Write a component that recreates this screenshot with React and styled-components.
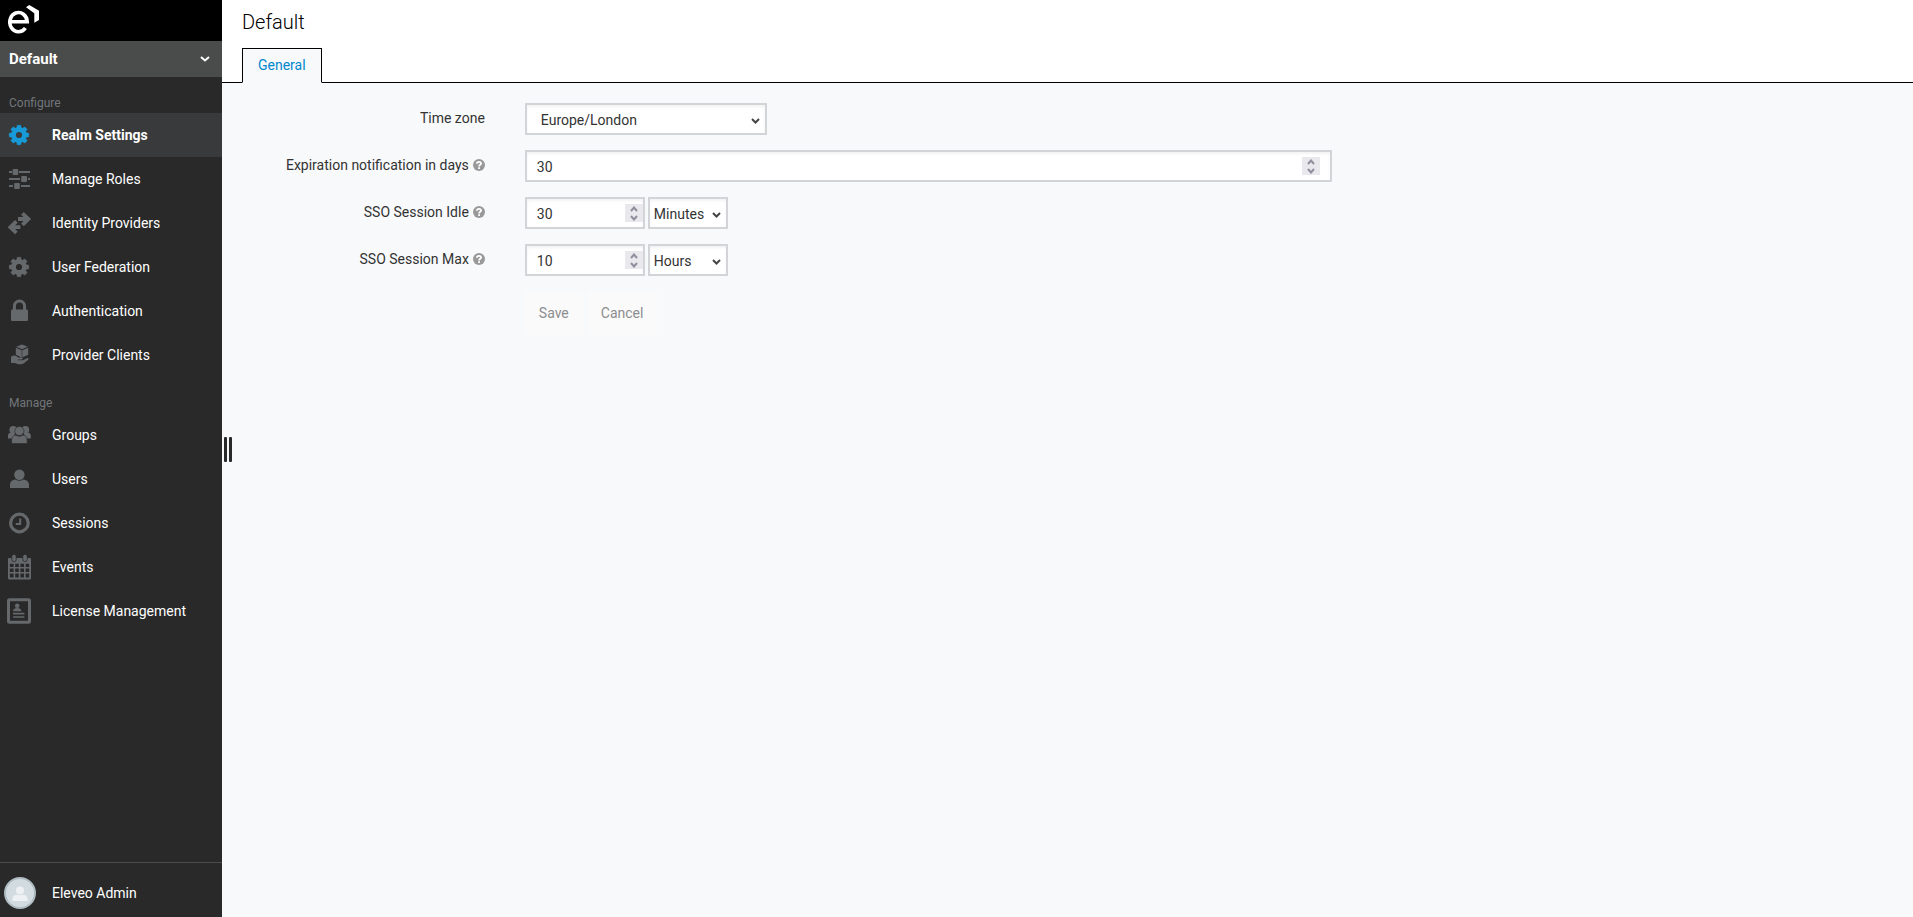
import React, { useState } from "react"
import styled, { createGlobalStyle } from "styled-components"

const GlobalStyle = createGlobalStyle`
  * {
    box-sizing: border-box;
  }
  body {
    margin: 0;
    font-family: Roboto, "Liberation Sans", sans-serif;
    font-size: 14px;
    line-height: 20px;
    color: #333;
    background: #f8f9fb;
  }
  button, input, select {
    font: inherit;
    color: inherit;
  }
`

const Container = styled.div`
  display: flex;
  min-height: 100vh;
`

const Sidebar = styled.aside`
  display: flex;
  flex-direction: column;
  flex: none;
  width: 222px;
  color: #fff;
  background: #292929;
`

const Brand = styled.a`
  display: flex;
  height: 41px;
  padding: 4px 8px;
  background: #000;
`

const RealmButton = styled.button`
  display: flex;
  align-items: center;
  justify-content: space-between;
  height: 36px;
  padding: 0 12px 0 9px;
  border: 0;
  font-size: 15px;
  font-weight: 700;
  color: #fff;
  background: #4a4b4b;
`

const NavTitle = styled.h2`
  margin: 0;
  padding: 16px 9px 0;
  height: 36px;
  font-size: 12px;
  line-height: 20px;
  font-weight: 400;
  color: #72767b;
`

const NavList = styled.ul`
  margin: 0;
  padding: 0;
  list-style: none;
`

const NavLink = styled.a`
  display: flex;
  align-items: center;
  gap: 20px;
  height: 44px;
  padding-left: 7px;
  color: #fff;
  font-weight: ${props => props.$active ? 700 : 400};
  background: ${props => props.$active ? "#393a3b" : "transparent"};
  text-decoration: none;
  svg {
    flex: none;
    color: ${props => props.$active ? "#189ad8" : "#66696b"};
  }
`

const UserLink = styled.a`
  display: flex;
  align-items: center;
  gap: 16px;
  height: 55px;
  margin-top: auto;
  padding: 6px 0 0 4px;
  border-top: 1px solid #4a4b4b;
  color: #fff;
  text-decoration: none;
`

const Splitter = styled.div`
  position: fixed;
  top: 437px;
  left: 224px;
  display: flex;
  gap: 2px;
  cursor: col-resize;
  &::before, &::after {
    content: "";
    width: 3px;
    height: 25px;
    border-radius: 1px;
    background: #292929;
  }
`

const Main = styled.main`
  flex: 1;
  min-width: 0;
`

const Header = styled.header`
  padding: 0 20px;
  border-bottom: 1px solid #000;
  background: #fff;
`

const Title = styled.h1`
  margin: 0;
  padding: 10px 0 14px;
  font-size: 20px;
  line-height: 24px;
  font-weight: 300;
  color: #000;
`

const Tabs = styled.nav`
  display: flex;
  margin-bottom: -1px;
`

const Tab = styled.a`
  padding: 6px 15px 7px;
  border: 1px solid #000;
  border-bottom-color: #f8f9fb;
  color: #0088ce;
  background: #f8f9fb;
  text-decoration: none;
`

const Form = styled.form`
  display: flex;
  flex-direction: column;
  gap: 15px;
  padding-top: 20px;
`

const Row = styled.div`
  display: grid;
  grid-template-columns: 2fr 6fr 4fr;
`

const LabelCell = styled.div`
  display: flex;
  justify-content: flex-end;
  gap: 4px;
  padding: 5px 19px 0;
  white-space: nowrap;
  svg {
    margin-top: 4px;
  }
`

const Field = styled.div`
  display: flex;
  gap: 3px;
  padding: 0 17px 0 21px;
`

const Control = styled.div`
  display: flex;
  align-items: center;
  position: relative;
  width: ${props => props.$width || "100%"};
  height: 32px;
  padding-right: ${props => props.$padRight || "0"};
  border: 2px solid #d3d4d7;
  background: #fff;
  box-shadow: inset 0 2px 3px rgba(3, 3, 3, 0.05);
`

const NumberInput = styled.input`
  flex: 1;
  min-width: 0;
  height: 28px;
  padding: 1px 10px 0;
  border: 0;
  outline: 0;
  background: transparent;
  appearance: textfield;
  &::-webkit-inner-spin-button {
    appearance: none;
    margin: 0;
  }
`

const SpinButtons = styled.div`
  display: flex;
  flex-direction: column;
  width: 18px;
  height: 18px;
  background: #e8e8ed;
`

const SpinButton = styled.button`
  display: flex;
  align-items: center;
  justify-content: center;
  height: 9px;
  padding: 0;
  border: 0;
  color: #8f8f9d;
  background: transparent;
`

const Select = styled.select`
  width: 100%;
  height: 28px;
  padding: 1px 18px 0 ${props => props.$indent || "4px"};
  border: 0;
  outline: 0;
  appearance: none;
  background: transparent;
`

const SelectArrow = styled.span`
  position: absolute;
  right: 5px;
  display: flex;
  padding-top: 3px;
  color: #444;
  pointer-events: none;
`

const Actions = styled.div`
  display: flex;
  grid-column: 2;
  gap: 4px;
  padding: 0 21px;
`

const Button = styled.button`
  height: 44px;
  padding: 0 13px;
  border: 1px solid #fafafa;
  color: #8b8d8f;
  background: #fafafa;
`

function Svg({ children, width = 25, height = 26, ...rest }) {
    return (
        <svg width={width} height={height} viewBox={`0 0 ${width} ${height}`} fill="currentColor" aria-hidden="true" {...rest}>
            {children}
        </svg>
    )
}

const Logo = () => (
    <Svg width={32} height={30}>
        <path d="M2 17.8H19.2A8.7 9.6 0 1 0 17.4 24" fill="none" stroke="#fff" strokeWidth="3.6" />
        <path d="M18 3.3L21.3 1L31 6.7V16L26.3 18.7V9.3Z" fill="#fff" />
    </Svg>
)

const Chevron = ({ size = 9, up, stroke = 2 }) => (
    <Svg width={size} height={6}>
        <path d={up ? `M1 5L${size / 2} 1.5L${size - 1} 5` : `M1 1L${size / 2} 4.5L${size - 1} 1`} fill="none" stroke="currentColor" strokeWidth={stroke} />
    </Svg>
)

const teeth = [0, 45, 90, 135, 180, 225, 270, 315]

const Gear = () => (
    <Svg>
        <circle cx="12" cy="13" r="5.4" fill="none" stroke="currentColor" strokeWidth="4.6" />
        {teeth.map(a => <path key={a} d="M9.8 6L10.3 3.3H13.7L14.2 6Z" stroke="currentColor" strokeWidth="0.6" strokeLinejoin="round" transform={`rotate(${a} 12 13)`} />)}
    </Svg>
)

const Sliders = () => (
    <Svg>
        <path d="M2 5H5V7H2ZM12 5H23V7H12ZM2 12H13V14H2ZM21 12H23V14H21ZM2 19H6V21H2ZM14 19H23V21H14Z" />
        <rect x="5.6" y="3" width="5.6" height="6" rx="1" />
        <rect x="14.2" y="10" width="5.8" height="6" rx="1" />
        <rect x="7.2" y="17" width="5.6" height="6" rx="1" />
    </Svg>
)

const Arrows = () => (
    <Svg>
        <g fill="none" stroke="currentColor" strokeWidth="3.8">
            <path d="M11 9H21M15.4 3.4L21.4 9L15.4 14.8" />
            <path d="M13.4 17.2H4M9.4 11.4L3.4 17.2L9.4 22.8" />
        </g>
    </Svg>
)

const Lock = () => (
    <Svg>
        <rect x="4" y="11.6" width="17" height="11.4" rx="1.2" />
        <path d="M7.4 13V8.4A5.1 5.4 0 0 1 17.6 8.4V13" fill="none" stroke="currentColor" strokeWidth="3" />
    </Svg>
)

const HandBox = () => (
    <Svg>
        <path d="M15 2.6L20.8 4.8L15 7.2L9.2 4.8Z" />
        <path d="M8.8 5.8L14.7 8.2V15.4L8.8 12.8ZM21.2 5.8L15.3 8.2V15.4L21.2 12.8Z" />
        <path d="M4 14.8C7 12.8 9 13.4 11 15.6H14.6C16.2 15.8 16 17.4 14.6 17.6H11V18.2H16L20 16.2C21.8 15.8 22.2 17 21 18L16.6 21.6C15 22.6 11 22.8 8 21H4Z" />
    </Svg>
)

const Groups = () => (
    <Svg>
        <circle cx="6.2" cy="7.8" r="3.8" />
        <circle cx="18.4" cy="7.8" r="3.8" />
        <path d="M1 16.4V13.6C1 11.4 2.6 10.4 4.4 10.4H8L7 16.4ZM23.8 16.4V13.6C23.8 11.4 22.2 10.4 20.4 10.4H16.8L17.8 16.4Z" />
        <circle cx="12.4" cy="9" r="4.6" stroke="#292929" strokeWidth="0.6" />
        <path d="M4.6 21.6V18C4.6 15 6.6 13.2 9 13C11 14.6 13.8 14.6 15.8 13C18.2 13.2 20.2 15 20.2 18V21.6Z" stroke="#292929" strokeWidth="0.6" />
    </Svg>
)

const User = () => (
    <Svg>
        <circle cx="12.4" cy="8.8" r="5.2" />
        <path d="M3 22V19C3 15.6 5.4 14 8.4 13.6C11 15.2 13.8 15.2 16.4 13.6C19.4 14 22 15.6 22 19V22Z" />
    </Svg>
)

const Clock = () => (
    <Svg>
        <circle cx="12.4" cy="13" r="8.8" fill="none" stroke="currentColor" strokeWidth="3.2" />
        <path d="M13.2 8.4V14H8.8" fill="none" stroke="currentColor" strokeWidth="2" />
    </Svg>
)

const Calendar = () => (
    <Svg>
        <path fillRule="evenodd" d="M2 4H23Q24 4 24 5V24Q24 25.4 23 25.4H2Q1 25.4 1 24V5Q1 4 2 4ZM2.8 9.8V13H6.6V9.8ZM8.2 9.8V13H11.8V9.8ZM13.4 9.8V13H17V9.8ZM18.6 9.8V13H22.2V9.8ZM2.8 14.6V18H6.6V14.6ZM8.2 14.6V18H11.8V14.6ZM13.4 14.6V18H17V14.6ZM18.6 14.6V18H22.2V14.6ZM2.8 19.6V23.6H6.6V19.6ZM8.2 19.6V23.6H11.8V19.6ZM13.4 19.6V23.6H17V19.6ZM18.6 19.6V23.6H22.2V19.6Z" />
        <g stroke="#292929" strokeWidth="0.8">
            <rect x="4.8" y="0.4" width="4.4" height="7.2" rx="2" />
            <rect x="15.8" y="0.4" width="4.4" height="7.2" rx="2" />
        </g>
    </Svg>
)

const License = () => (
    <Svg>
        <rect x="1.5" y="1.7" width="21" height="22.6" rx="1" fill="none" stroke="currentColor" strokeWidth="3" />
        <circle cx="10.2" cy="7.8" r="2.3" />
        <path d="M6 13.2C6 10.8 8 10 10.2 10S14.4 10.8 14.4 13.2ZM6 14.8H17.4V16.4H6ZM6 18.2H17.4V19.8H6Z" />
    </Svg>
)

const Help = () => (
    <Svg width={12} height={12}>
        <circle cx="6" cy="6" r="6" fill="#999" />
        <path d="M3.9 4.7C4 2.3 8.1 2.3 8.1 4.6C8.1 5.8 6.1 5.9 6.1 7.4M6.1 8.2V10" fill="none" stroke="#fff" strokeWidth="1.8" />
    </Svg>
)

const Avatar = () => (
    <Svg width={32} height={32}>
        <circle cx="16" cy="16" r="15" fill="#d1dbe0" stroke="#aebbc1" strokeWidth="2" />
        <circle cx="16" cy="13.6" r="4" fill="#edf1f3" />
        <path d="M8.4 24V22C8.4 19 10.4 17.8 13 17.4C15 18.6 17 18.6 19 17.4C21.6 17.8 23.6 19 23.6 22V24Z" fill="#edf1f3" />
    </Svg>
)

const configure = [
    { name: "Realm Settings", icon: Gear, active: true },
    { name: "Manage Roles", icon: Sliders },
    { name: "Identity Providers", icon: Arrows },
    { name: "User Federation", icon: Gear },
    { name: "Authentication", icon: Lock },
    { name: "Provider Clients", icon: HandBox },
]

const manage = [
    { name: "Groups", icon: Groups },
    { name: "Users", icon: User },
    { name: "Sessions", icon: Clock },
    { name: "Events", icon: Calendar },
    { name: "License Management", icon: License },
]

function NavSection({ title, items }) {
    return (
        <nav aria-label={title}>
            <NavTitle>{title}</NavTitle>
            <NavList>
                {items.map(({ name, icon: Icon, active }) => (
                    <li key={name}>
                        <NavLink href="#" $active={active}><Icon />{name}</NavLink>
                    </li>
                ))}
            </NavList>
        </nav>
    )
}

function NumberField({ id, initial, width, padRight }) {
    const [value, setValue] = useState(initial)
    return (
        <Control $width={width} $padRight={padRight}>
            <NumberInput id={id} type="number" value={value} onChange={e => setValue(Number(e.target.value))} />
            <SpinButtons>
                <SpinButton type="button" tabIndex={-1} aria-label="Increase" onClick={() => setValue(value + 1)}>
                    <Chevron size={8} up />
                </SpinButton>
                <SpinButton type="button" tabIndex={-1} aria-label="Decrease" onClick={() => setValue(value - 1)}>
                    <Chevron size={8} />
                </SpinButton>
            </SpinButtons>
        </Control>
    )
}

function SelectField({ options, initial, width, indent, ...rest }) {
    return (
        <Control $width={width}>
            <Select defaultValue={initial} $indent={indent} {...rest}>
                {options.map(option => <option key={option}>{option}</option>)}
            </Select>
            <SelectArrow><Chevron /></SelectArrow>
        </Control>
    )
}

function FormRow({ id, label, help, children }) {
    return (
        <Row>
            <LabelCell>
                <label htmlFor={id}>{label}</label>
                {help && <Help />}
            </LabelCell>
            <Field>{children}</Field>
        </Row>
    )
}

const units = ["Minutes", "Hours", "Days"]

export default function App() {
    return (
        <Container>
            <GlobalStyle />
            <Sidebar>
                <Brand href="#" aria-label="Eleveo"><Logo /></Brand>
                <RealmButton type="button">Default<Chevron size={10} /></RealmButton>
                <NavSection title="Configure" items={configure} />
                <NavSection title="Manage" items={manage} />
                <UserLink href="#"><Avatar />Eleveo Admin</UserLink>
            </Sidebar>
            <Splitter />
            <Main>
                <Header>
                    <Title>Default</Title>
                    <Tabs><Tab href="#">General</Tab></Tabs>
                </Header>
                <Form onSubmit={e => e.preventDefault()}>
                    <FormRow id="timezone" label="Time zone">
                        <SelectField id="timezone" width="242px" indent="14px" initial="Europe/London" options={["Europe/London", "Europe/Prague", "UTC"]} />
                    </FormRow>
                    <FormRow id="expiration" label="Expiration notification in days" help>
                        <NumberField id="expiration" initial={30} padRight="10px" />
                    </FormRow>
                    <FormRow id="idle" label="SSO Session Idle" help>
                        <NumberField id="idle" initial={30} width="120px" />
                        <SelectField aria-label="SSO Session Idle unit" width="80px" initial="Minutes" options={units} />
                    </FormRow>
                    <FormRow id="max" label="SSO Session Max" help>
                        <NumberField id="max" initial={10} width="120px" />
                        <SelectField aria-label="SSO Session Max unit" width="80px" initial="Hours" options={units} />
                    </FormRow>
                    <Row>
                        <Actions>
                            <Button type="submit">Save</Button>
                            <Button type="button">Cancel</Button>
                        </Actions>
                    </Row>
                </Form>
            </Main>
        </Container>
    );
}
